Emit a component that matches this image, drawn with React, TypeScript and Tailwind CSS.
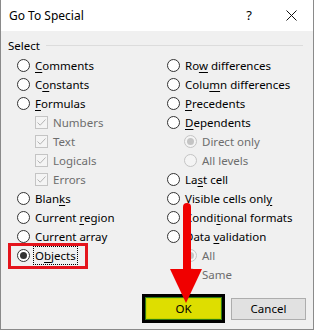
import React from "react";

function Radio({ checked = false, disabled = false }: { checked?: boolean; disabled?: boolean }) {
  return (
    <span
      className={
        disabled
          ? "w-[13px] h-[13px] rounded-full border border-[#c4c4c4] bg-[#f4f4f4] flex items-center justify-center shrink-0"
          : "w-[13px] h-[13px] rounded-full border border-[#333333] bg-white flex items-center justify-center shrink-0"
      }
    >
      {checked && (
        <span
          className={
            disabled ? "w-[7px] h-[7px] rounded-full bg-[#c4c4c4]" : "w-[7px] h-[7px] rounded-full bg-[#333333]"
          }
        />
      )}
    </span>
  );
}

function Check() {
  return (
    <span className="w-[13px] h-[13px] border border-[#c4c4c4] bg-[#f4f4f4] flex items-center justify-center shrink-0">
      <svg width="11" height="11" viewBox="0 0 11 11">
        <path d="M1.5 5.5 L4.2 8.2 L9.5 2.5" fill="none" stroke="#b4b4b4" strokeWidth="1" />
      </svg>
    </span>
  );
}

function Label({ text, u, disabled }: { text: string; u?: number; disabled?: boolean }) {
  const cls = disabled ? "text-[#6d6d6d] whitespace-nowrap" : "text-black whitespace-nowrap";
  if (u === undefined) return <span className={cls}>{text}</span>;
  return (
    <span className={cls}>
      {text.slice(0, u)}
      <span className="underline underline-offset-[2px]">{text[u]}</span>
      {text.slice(u + 1)}
    </span>
  );
}

function RadioRow({ text, u, checked }: { text: string; u?: number; checked?: boolean }) {
  return (
    <div className="h-[19px] flex items-center gap-[5px]">
      <Radio checked={checked} />
      <Label text={text} u={u} />
    </div>
  );
}

function CheckRow({ text }: { text: string }) {
  return (
    <div className="h-[19px] flex items-center gap-[5px] pl-[18px]">
      <Check />
      <Label text={text} disabled />
    </div>
  );
}

function SubRadioRow({ text, checked }: { text: string; checked?: boolean }) {
  return (
    <div className="h-[19px] flex items-center gap-[5px] pl-[17px]">
      <Radio checked={checked} disabled />
      <Label text={text} disabled />
    </div>
  );
}

export default function App() {
  return (
    <div className="w-[314px] h-[330px] bg-[#f0f0f0] border-l border-r border-b border-[#8a8a8a] relative overflow-hidden font-['Segoe_UI','Noto_Sans',sans-serif] text-[11.5px] leading-none">
      {/* Title bar */}
      <div className="h-[31px] bg-white flex items-center pl-[8px] pr-[16px]">
        <span className="text-[12px] text-black flex-1">Go To Special</span>
        <span className="text-[13px] text-black mr-[34px]">?</span>
        <svg width="11" height="11" viewBox="0 0 11 11">
          <path d="M0.5 0.5 L10.5 10.5 M10.5 0.5 L0.5 10.5" stroke="#111" strokeWidth="1" />
        </svg>
      </div>

      {/* Select header */}
      <div className="pt-[5px] pl-[7px] pr-[10px] h-[24px] flex items-center gap-[6px]">
        <span className="text-black">Select</span>
        <span className="flex-1 h-px bg-[#dcdcdc]" />
      </div>

      {/* Options */}
      <div className="grid grid-cols-[150px_1fr] pl-[16px] mt-[1px]">
        <div className="flex flex-col relative">
          <RadioRow text="Comments" u={0} />
          <RadioRow text="Constants" u={1} />
          <RadioRow text="Formulas" u={0} />
          <CheckRow text="Numbers" />
          <CheckRow text="Text" />
          <CheckRow text="Logicals" />
          <CheckRow text="Errors" />
          <RadioRow text="Blanks" u={4} />
          <RadioRow text="Current region" u={8} />
          <RadioRow text="Current array" />
          <div className="h-[19px] flex items-center gap-[3px] relative">
            <Radio checked />
            <span className="border border-dotted border-black px-[1px] h-[19px] flex items-center">
              <Label text="Objects" u={1} />
            </span>
            <span className="absolute left-[-9px] top-[-3px] w-[80px] h-[26px] border-[3px] border-[#e4141c]" />
          </div>
        </div>
        <div className="flex flex-col">
          <RadioRow text="Row differences" u={2} />
          <RadioRow text="Column differences" u={4} />
          <RadioRow text="Precedents" u={0} />
          <RadioRow text="Dependents" u={0} />
          <SubRadioRow text="Direct only" checked />
          <SubRadioRow text="All levels" />
          <RadioRow text="Last cell" u={2} />
          <RadioRow text="Visible cells only" u={17} />
          <RadioRow text="Conditional formats" u={5} />
          <RadioRow text="Data validation" u={5} />
          <SubRadioRow text="All" checked />
          <SubRadioRow text="Same" />
        </div>
      </div>

      {/* Buttons */}
      <div className="flex justify-end items-center gap-[6px] pr-[7px] mt-[10px]">
        <div className="w-[83px] h-[29px] border-[3px] border-black bg-[#2f7d12] p-[1px]">
          <div className="w-full h-full bg-[#dede00] border border-[#c8d400] flex items-center justify-center text-black">
            OK
          </div>
        </div>
        <div className="w-[75px] h-[22px] border border-[#adadad] bg-[#e1e1e1] flex items-center justify-center text-black">
          Cancel
        </div>
      </div>

      {/* Red arrow overlay */}
      <svg className="absolute left-[165px] top-[200px]" width="40" height="106" viewBox="0 0 40 106">
        <path d="M17 7 Q17 3 21 3 Q25 3 25 7 L25 70 L17 70 Z" fill="#f00000" />
        <polygon points="4,69 36,69 20,103" fill="#f00000" />
      </svg>
    </div>
  );
}
